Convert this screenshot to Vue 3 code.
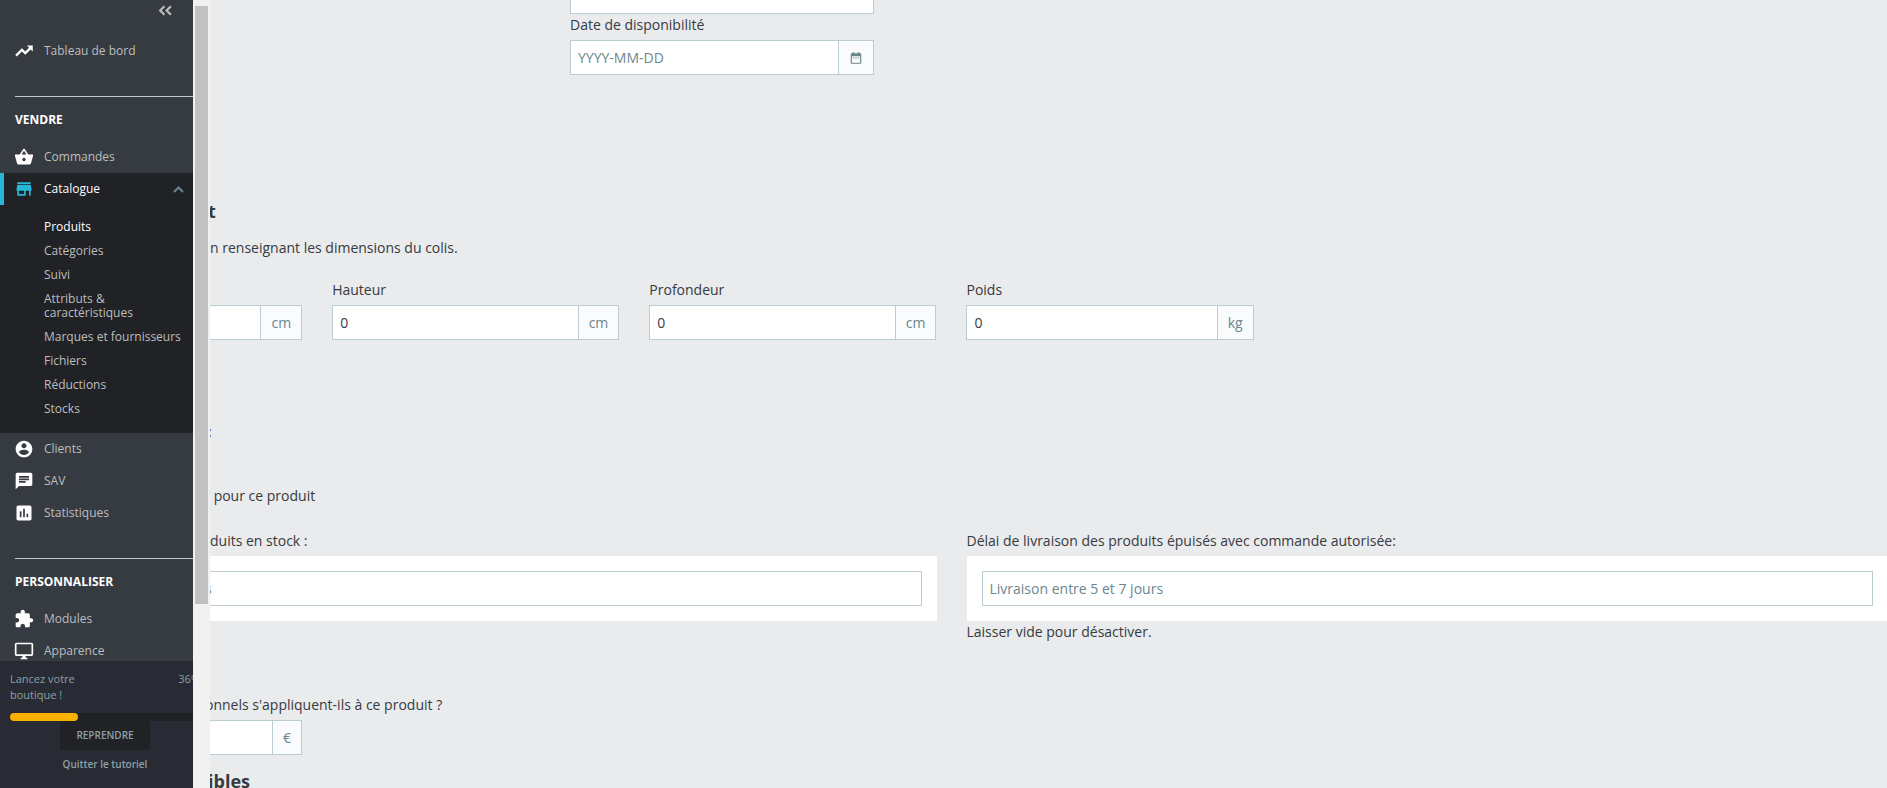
<script setup>
import { ref } from 'vue'

// Sidebar menu
const dashboard = { label: 'Tableau de bord', icon: 'trend' }

const sections = [
  {
    title: 'Vendre',
    items: [
      { label: 'Commandes', icon: 'basket' },
      {
        label: 'Catalogue',
        icon: 'store',
        active: true,
        children: [
          'Produits',
          'Catégories',
          'Suivi',
          'Attributs & caractéristiques',
          'Marques et fournisseurs',
          'Fichiers',
          'Réductions',
          'Stocks',
        ],
      },
      { label: 'Clients', icon: 'account' },
      { label: 'SAV', icon: 'chat' },
      { label: 'Statistiques', icon: 'stats' },
    ],
  },
  {
    title: 'Personnaliser',
    items: [
      { label: 'Modules', icon: 'puzzle' },
      { label: 'Apparence', icon: 'desktop' },
    ],
  },
]

const icons = {
  trend: 'M15.5 5.5l2.6 2.6-4.6 4.6-4-4L1.5 16.6 3.4 18.5l6.1-6 4 4 6.5-6.4 2.5 2.4v-7z',
  basket: 'M17.21 9l-4.38-6.56c-.19-.28-.51-.42-.83-.42-.32 0-.64.14-.83.43L6.79 9H2c-.55 0-1 .45-1 1 0 .09.01.18.04.27l2.54 9.27c.23.84 1 1.46 1.92 1.46h13c.92 0 1.69-.62 1.93-1.46l2.54-9.27L23 10c0-.55-.45-1-1-1h-4.79zM9 9l3-4.4L15 9H9zm3 8c-1.1 0-2-.9-2-2s.9-2 2-2 2 .9 2 2-.9 2-2 2z',
  store: 'M20 4H4v2h16V4zm1 10v-2l-1-5H4l-1 5v2h1v6h10v-6h4v6h2v-6h1zm-9 4H6v-4h6v4z',
  account: 'M12 2C6.48 2 2 6.48 2 12s4.48 10 10 10 10-4.48 10-10S17.52 2 12 2zm0 3c1.66 0 3 1.34 3 3s-1.34 3-3 3-3-1.34-3-3 1.34-3 3-3zm0 14.2c-2.5 0-4.71-1.28-6-3.22.03-1.99 4-3.08 6-3.08 1.99 0 5.97 1.09 6 3.08-1.29 1.94-3.5 3.22-6 3.22z',
  chat: 'M20 2H4c-1.1 0-1.99.9-1.99 2L2 22l4-4h14c1.1 0 2-.9 2-2V4c0-1.1-.9-2-2-2zM6 9h12v2H6V9zm8 5H6v-2h8v2zm4-6H6V6h12v2z',
  stats: 'M19 3H5c-1.1 0-2 .9-2 2v14c0 1.1.9 2 2 2h14c1.1 0 2-.9 2-2V5c0-1.1-.9-2-2-2zM9 17H7v-7h2v7zm4 0h-2V7h2v10zm4 0h-2v-4h2v4z',
  puzzle: 'M20.5 11H19V7c0-1.1-.9-2-2-2h-4V3.5C13 2.12 11.88 1 10.5 1S8 2.12 8 3.5V5H4c-1.1 0-1.99.9-1.99 2v3.8H3.5c1.49 0 2.7 1.21 2.7 2.7s-1.21 2.7-2.7 2.7H2V20c0 1.1.9 2 2 2h3.8v-1.5c0-1.49 1.21-2.7 2.7-2.7 1.49 0 2.7 1.21 2.7 2.7V22H17c1.1 0 2-.9 2-2v-4h1.5c1.38 0 2.5-1.12 2.5-2.5S21.88 11 20.5 11z',
  desktop: 'M21 2H3c-1.1 0-2 .9-2 2v12c0 1.1.9 2 2 2h7v2H8v2h8v-2h-2v-2h7c1.1 0 2-.9 2-2V4c0-1.1-.9-2-2-2zm0 14H3V4h18v12z',
}

const progress = ref(36)

// Product form
const label = ref('')
const date = ref('')
const dimensions = ref([
  { id: 'width', label: '', unit: 'cm', value: '' },
  { id: 'height', label: 'Hauteur', unit: 'cm', value: '0' },
  { id: 'depth', label: 'Profondeur', unit: 'cm', value: '0' },
  { id: 'weight', label: 'Poids', unit: 'kg', value: '0' },
])
const inStock = ref('')
const outOfStock = ref('')
const fees = ref('')
</script>

<template>
  <div class="page">
    <aside class="sidebar">
      <div class="panel">
        <nav class="menu">
          <button class="collapse" type="button" aria-label="Réduire le menu">
            <svg viewBox="0 0 14 10"><path d="M6 1L2 5l4 4M12 1L8 5l4 4" /></svg>
          </button>
          <a class="item" href="#">
            <svg class="icon" viewBox="0 0 24 24"><path :d="icons[dashboard.icon]" /></svg>
            {{ dashboard.label }}
          </a>

          <section v-for="section in sections" :key="section.title" class="section">
            <h2>{{ section.title }}</h2>
            <template v-for="item in section.items" :key="item.label">
              <a class="item" :class="{ active: item.active }" href="#">
                <svg class="icon" viewBox="0 0 24 24"><path :d="icons[item.icon]" /></svg>
                {{ item.label }}
                <svg v-if="item.children" class="arrow" viewBox="0 0 11 7"><path d="M1 6l4.500-4.500L10 6" /></svg>
              </a>
              <ul v-if="item.children" class="submenu">
                <li v-for="(child, i) in item.children" :key="child">
                  <a href="#" :class="{ current: i === 0 }">{{ child }}</a>
                </li>
              </ul>
            </template>
          </section>
        </nav>

        <div class="onboarding">
          <div class="onboarding-head">
            <span class="onboarding-text">Lancez votre boutique !</span>
            <span>{{ progress }}%</span>
          </div>
          <div class="bar">
            <div class="bar-fill" :style="{ width: progress + '%' }"></div>
          </div>
          <button class="resume" type="button">Reprendre</button>
          <a class="quit" href="#">Quitter le tutoriel</a>
        </div>
      </div>
      <div class="scrollbar"><div class="thumb"></div></div>
    </aside>

    <main class="content">
      <div class="availability">
        <input v-model="label" class="field" type="text" aria-label="Libellé" />
        <label for="date">Date de disponibilité</label>
        <div class="group">
          <input id="date" v-model="date" class="field" type="text" placeholder="YYYY-MM-DD" />
          <span class="addon">
            <svg viewBox="0 0 24 24">
              <path d="M9 11H7v2h2v-2zm4 0h-2v2h2v-2zm4 0h-2v2h2v-2zm2-7h-1V2h-3v2H9V2H6v2H5c-1.11 0-1.99.9-1.99 2L3 20c0 1.1.89 2 2 2h14c1.1 0 2-.9 2-2V6c0-1.1-.9-2-2-2zm0 16H5V9h14v11z" />
            </svg>
          </span>
        </div>
      </div>

      <h2 class="title">t</h2>
      <p class="intro scrolled">n renseignant les dimensions du colis.</p>
      <div class="dimensions">
        <div v-for="dim in dimensions" :key="dim.id" class="dimension">
          <label :for="dim.id">{{ dim.label }}</label>
          <div class="group">
            <input :id="dim.id" v-model="dim.value" class="field" type="text" />
            <span class="addon">{{ dim.unit }}</span>
          </div>
        </div>
      </div>

      <p class="delay">:</p>
      <p class="specific scrolled">&nbsp;pour ce produit</p>
      <div class="delivery">
        <div>
          <label class="scrolled" for="in-stock">duits en stock :</label>
          <div class="box">
            <input id="in-stock" v-model="inStock" class="field field-scrolled" type="text" placeholder="s" />
          </div>
        </div>
        <div>
          <label for="out-of-stock">Délai de livraison des produits épuisés avec commande autorisée:</label>
          <div class="box">
            <input id="out-of-stock" v-model="outOfStock" class="field" type="text" placeholder="Livraison entre 5 et 7 jours" />
          </div>
          <p class="help">Laisser vide pour désactiver.</p>
        </div>
      </div>

      <div class="fees">
        <label for="fees">onnels s'appliquent-ils à ce produit ?</label>
        <div class="group">
          <input id="fees" v-model="fees" class="field" type="text" />
          <span class="addon">€</span>
        </div>
      </div>
      <h2 class="title">ibles</h2>
    </main>
  </div>
</template>

<style>
html,
body {
  height: 100%;
  overflow: hidden;
  background: #eaebec;
}
</style>

<style scoped>
* {
  box-sizing: border-box;
}

.page {
  font-family: "Open Sans", "Noto Sans", sans-serif;
  font-size: 14px;
  line-height: 20px;
  color: #363a41;
}

h2,
p,
ul {
  margin: 0;
  padding: 0;
}

button,
input {
  font-family: inherit;
}

a {
  text-decoration: none;
}

/* Sidebar */
.sidebar {
  position: fixed;
  top: 0;
  bottom: 0;
  left: 0;
  z-index: 10;
  display: flex;
}

.panel {
  display: flex;
  flex-direction: column;
  width: 193px;
  overflow: hidden;
  background: #363a41;
}

.menu {
  flex: 1;
  min-height: 0;
  overflow: hidden;
}

.collapse {
  display: block;
  height: 21px;
  margin: 0 20px 14px auto;
  padding: 0;
  border: none;
  background: none;
}

.collapse svg {
  display: block;
  width: 15px;
  height: 11px;
  fill: none;
  stroke: #bebebe;
  stroke-width: 2;
}

.item {
  display: flex;
  align-items: center;
  height: 32px;
  padding: 0 9px 0 14px;
  font-size: 12px;
  color: #bebebe;
}

.icon {
  width: 20px;
  height: 20px;
  margin-right: 10px;
  fill: #fff;
}

.item.active {
  padding-left: 10px;
  border-left: 4px solid #25b9d7;
  background: #202226;
  color: #fff;
}

.item.active .icon {
  fill: #25b9d7;
}

.arrow {
  width: 11px;
  height: 7px;
  margin-left: auto;
  fill: none;
  stroke: #6c868e;
  stroke-width: 2;
}

.section {
  margin-top: 29px;
}

.section h2 {
  margin-left: 15px;
  padding-top: 2px;
  border-top: 1px solid #bbcdd2;
  font-size: 12px;
  line-height: 42px;
  color: #fff;
  text-transform: uppercase;
}

.submenu {
  padding: 10px 0 12px;
  list-style: none;
  background: #202226;
}

.submenu a {
  display: block;
  padding: 5px 10px 5px 44px;
  font-size: 12px;
  line-height: 14px;
  color: #bebebe;
}

.submenu a.current {
  color: #fff;
}

.onboarding {
  display: flex;
  flex-direction: column;
  align-items: center;
  width: 210px;
  height: 127px;
  padding: 10px;
  background: #282b33;
  color: #8da0a6;
}

.onboarding-head {
  display: flex;
  justify-content: space-between;
  width: 100%;
  margin-bottom: 10px;
  font-size: 11px;
  line-height: 16px;
}

.onboarding-text {
  width: 90px;
}

.bar {
  width: 100%;
  height: 8px;
  border-radius: 4px;
  background: #202226;
}

.bar-fill {
  height: 8px;
  border-radius: 4px;
  background: #fbb000;
}

.resume {
  height: 29px;
  padding: 0 16px 2px;
  border: none;
  background: #202226;
  font-size: 10px;
  font-weight: 600;
  color: #8da0a6;
  text-transform: uppercase;
}

.quit {
  margin-top: 4px;
  font-size: 10px;
  font-weight: 600;
  color: #8da0a6;
}

.scrollbar {
  width: 17px;
  padding: 6px 2px 0;
  background: #f1f1f1;
}

.thumb {
  height: 598px;
  background: #c1c1c1;
}

/* Product form */
.content {
  margin-right: -1px;
  padding-left: 15px;
}

/* Texts that run out from under the sidebar */
.scrolled {
  padding-left: 195px;
}

label {
  display: block;
  margin-bottom: 5px;
}

.field {
  display: block;
  width: 100%;
  min-width: 0;
  height: 35px;
  padding: 0 7px;
  border: 1px solid #bbcdd2;
  border-radius: 0;
  outline: none;
  background: #fff;
  font-size: 14px;
  color: #363a41;
}

.field-scrolled {
  padding-left: 174px;
}

.field::placeholder {
  color: #6c868e;
  opacity: 1;
}

.group {
  display: flex;
}

.addon {
  display: flex;
  align-items: center;
  padding: 0 10px;
  border: 1px solid #bbcdd2;
  border-left: none;
  background: #fafbfc;
  color: #6c868e;
}

.addon svg {
  width: 14px;
  height: 14px;
  fill: #6c868e;
}

.availability {
  width: 304px;
  margin: -21px 0 126px 555px;
}

.availability label {
  margin-top: 1px;
}

.title {
  padding-left: 193px;
  font-size: 18px;
  line-height: 20px;
}

.intro {
  margin: 17px 0 22px;
}

.dimensions {
  display: grid;
  grid-template-columns: repeat(6, 1fr);
  gap: 30px;
}

.dimension {
  display: flex;
  flex-direction: column;
  justify-content: flex-end;
}

.delay {
  margin-top: 82px;
  padding-left: 193px;
}

.specific {
  margin: 44px 0 25px;
}

.delivery {
  display: grid;
  grid-template-columns: 1fr 1fr;
  gap: 30px;
}

.box {
  padding: 15px;
  background: #fff;
}

.help {
  margin: 1px 0 53px;
}

.fees label {
  padding-left: 190px;
}

.fees .group {
  width: 287px;
  margin-bottom: 16px;
}
</style>
